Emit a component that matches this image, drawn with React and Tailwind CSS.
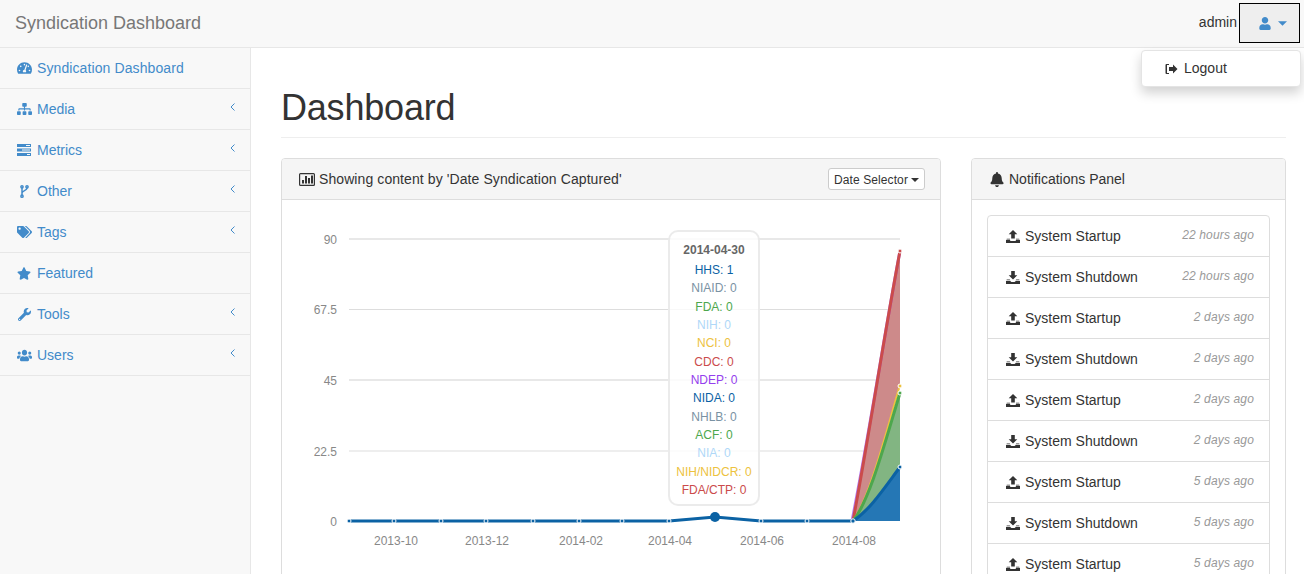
import React from "react";
import { FaTachometerAlt, FaSitemap, FaTags, FaStar, FaWrench, FaUsers, FaUser, FaBell } from "react-icons/fa";

const TasksIcon = ({ className }) => (
  <svg className={className} viewBox="0 0 14 12" fill="currentColor">
    <path fillRule="evenodd" d="M0 0h14v3H0zM9 1v1h4V1zM0 4.5h14v3H0zM5 5.5v1h8v-1zM0 9h14v3H0zM10 10v1h3v-1z" />
  </svg>
);
const ForkIcon = ({ className }) => (
  <svg className={className} viewBox="0 0 9 14" fill="none" stroke="currentColor" strokeWidth="1.6">
    <circle cx="1.8" cy="2" r="1.2" />
    <circle cx="7.2" cy="2" r="1.2" />
    <circle cx="1.8" cy="12" r="1.2" />
    <path d="M1.8 3.2v7.6M7.2 3.2c0 3-5.4 2.6-5.4 5.6" />
  </svg>
);
const LeftAngle = () => (
  <svg className="w-[5px] h-[8px] mb-[4px] text-[#428bca]" viewBox="0 0 5 8" fill="none" stroke="currentColor" strokeWidth="1">
    <path d="M4.5 0.5 1 4l3.5 3.5" />
  </svg>
);
const LogoutIcon = ({ className }) => (
  <svg className={className} viewBox="0 0 13 12" fill="currentColor">
    <path d="M4 1H1.5A1 1 0 0 0 .5 2v8a1 1 0 0 0 1 1H4V10H2V2h2z" />
    <path d="M4 4h4V1.5L12.5 6 8 10.5V8H4z" />
  </svg>
);
const UploadIcon = ({ className }) => (
  <svg className={className} viewBox="0 0 14 13" fill="currentColor">
    <path d="M7 0l4.3 4.3H8.8V8.5H5.2V4.3H2.7z" />
    <path d="M0 10h4.2v1h5.6v-1H14v3H0zM.8 8.8H4v.6H.4zM10 8.8h3.2l.4.6H10z" />
  </svg>
);
const DownloadIcon = ({ className }) => (
  <svg className={className} viewBox="0 0 14 13" fill="currentColor">
    <path d="M5.2 0h3.6v4.2h2.5L7 8.5 2.7 4.2h2.5z" />
    <path d="M0 10h4.2l1.2 1h3.2l1.2-1H14v3H0zM.8 8.6H3.8l.6.7H.4zM10.2 8.6h3l.4.7H9.6z" />
  </svg>
);
const BarBoxIcon = ({ className }) => (
  <svg className={className} viewBox="0 0 16 13" fill="currentColor">
    <path fillRule="evenodd" d="M1.5 0h13A1.5 1.5 0 0 1 16 1.5v10a1.5 1.5 0 0 1-1.5 1.5h-13A1.5 1.5 0 0 1 0 11.5v-10A1.5 1.5 0 0 1 1.5 0zM1.2 1.2v10.6h13.6V1.2z" />
    <path d="M3 7h2v3.5H3zM6 3h2v7.5H6zM9 5h2v5.5H9zM12 2.5h2v8h-2z" />
  </svg>
);
const Caret = ({ className }) => (
  <svg className={className} viewBox="0 0 8 4" fill="currentColor"><path d="M0 0h8L4 4z" /></svg>
);

const navItems = [
  { label: "Syndication Dashboard", track: "tracking-[0.1px]", icon: <FaTachometerAlt className="w-[15px] h-[14px]" /> },
  { label: "Media", icon: <FaSitemap className="w-[15px] h-[14px]" />, sub: true },
  { label: "Metrics", icon: <TasksIcon className="w-[14px] h-[12px]" />, sub: true },
  { label: "Other", icon: <ForkIcon className="w-[9px] h-[13px] ml-[3px]" />, sub: true },
  { label: "Tags", icon: <FaTags className="w-[15px] h-[14px]" />, sub: true },
  { label: "Featured", icon: <FaStar className="w-[14px] h-[13px]" /> },
  { label: "Tools", icon: <FaWrench className="w-[13px] h-[13px] ml-[1px]" />, sub: true },
  { label: "Users", icon: <FaUsers preserveAspectRatio="none" className="w-[15px] h-[13px]" />, sub: true },
];

const notes = [
  ["up", "System Startup", "22 hours ago"],
  ["down", "System Shutdown", "22 hours ago"],
  ["up", "System Startup", "2 days ago"],
  ["down", "System Shutdown", "2 days ago"],
  ["up", "System Startup", "2 days ago"],
  ["down", "System Shutdown", "2 days ago"],
  ["up", "System Startup", "5 days ago"],
  ["down", "System Shutdown", "5 days ago"],
  ["up", "System Startup", "5 days ago"],
];

const tips = [
  ["HHS: 1", "text-[#0b62a4]"],
  ["NIAID: 0", "text-[#7a92a3]"],
  ["FDA: 0", "text-[#4da74d]"],
  ["NIH: 0", "text-[#afd8f8]"],
  ["NCI: 0", "text-[#edc240]"],
  ["CDC: 0", "text-[#cb4b4b]"],
  ["NDEP: 0", "text-[#9440ed]"],
  ["NIDA: 0", "text-[#0b62a4]"],
  ["NHLB: 0", "text-[#7a92a3]"],
  ["ACF: 0", "text-[#4da74d]"],
  ["NIA: 0", "text-[#afd8f8]"],
  ["NIH/NIDCR: 0", "text-[#edc240]"],
  ["FDA/CTP: 0", "text-[#cb4b4b]"],
];

const pts = [349, 394, 441, 486, 533, 579, 622, 669, 761, 807];
const grid = [
  ["90", 239, 2, "#e8e8e8"],
  ["67.5", 309.5, 1, "#dddddd"],
  ["45", 380, 2, "#e8e8e8"],
  ["22.5", 451, 1, "#dddddd"],
];
const xl = [["2013-10", 396], ["2013-12", 487], ["2014-02", 581], ["2014-04", 670], ["2014-06", 762], ["2014-08", 854]];

const blue = "C870 510 885 487 900 467";
const green = "C870 500 885 442 900 393";
const yellow = "C870 497 885 436 900 385";
const red = "C870 430 885 330 900 251";

function Chart() {
  return (
    <svg className="block w-[628px] h-[358px] shrink-0" viewBox="297 215 628 358">
      {grid.map(([l, y, w, c]) => (
        <g key={l}>
          <line x1="349" x2="900" y1={y} y2={y} stroke={c} strokeWidth={w} />
          <text x="337" y={y + 4.5} textAnchor="end" fontSize="12" fill="#888">{l}</text>
        </g>
      ))}
      <text x="337" y="525.5" textAnchor="end" fontSize="12" fill="#888">0</text>
      {xl.map(([l, x]) => (
        <text key={l} x={x} y="545" textAnchor="middle" fontSize="12" fill="#888">{l}</text>
      ))}
      <path d={`M853 521 ${blue} V521Z`} fill="#2577b5" />
      <path d={`M853 521 ${green} V467 C885 487 870 510 853 521Z`} fill="#82b582" />
      <path d={`M853 521 ${red} V385 C885 436 870 497 853 521Z`} fill="#cd8a8a" />
      <path d={`M852 521 ${red}`} fill="none" stroke="#9440ed" strokeWidth="3" strokeOpacity="0.7" />
      <path d={`M853 521 ${red}`} fill="none" stroke="#cb4b4b" strokeWidth="3" />
      <path d={`M853 521 ${yellow}`} fill="none" stroke="#edc240" strokeWidth="2" />
      <path d={`M853 521 ${green}`} fill="none" stroke="#4da74d" strokeWidth="3" />
      <path d={`M853 521 ${blue}`} fill="none" stroke="#0b62a4" strokeWidth="3" />
      <path d="M349 521H669L715 517 761 521H853" fill="none" stroke="#0b62a4" strokeWidth="3" />
      {pts.map((x) => (
        <circle key={x} cx={x} cy="521" r="2" fill="#0b62a4" stroke="#fff" strokeWidth="1" />
      ))}
      <circle cx="853" cy="521" r="2.2" fill="#0b62a4" stroke="#fff" strokeWidth="1" />
      <circle cx="715" cy="517" r="5" fill="#0b62a4" />
      <circle cx="900" cy="467" r="2" fill="#0b62a4" stroke="#fff" strokeWidth="1" />
      <circle cx="900" cy="393" r="2" fill="#4da74d" stroke="#fff" strokeWidth="1" />
      <circle cx="900" cy="386" r="2" fill="#edc240" stroke="#fff" strokeWidth="1" />
      <circle cx="900" cy="251" r="2" fill="#cb4b4b" stroke="#fff" strokeWidth="1" />
    </svg>
  );
}

export default function App() {
  return (
    <div className="relative h-[574px] overflow-hidden bg-white flex flex-col font-['Liberation_Sans',Arial,sans-serif] text-[14px] text-[#333]">
      <header className="relative h-[48px] shrink-0 bg-[#f8f8f8] border-b border-[#e7e7e7] flex items-center pl-[15px] pr-[4px]">
        <span className="text-[18px] text-[#777] flex-1 mb-[1px]">Syndication Dashboard</span>
        <span className="mr-[2px] mb-[3px]">admin</span>
        <button className="h-[40px] w-[61px] mb-[1px] bg-[#eeeeee] border border-black flex items-center justify-center gap-[7px] pl-[6px] text-[#428bca]">
          <FaUser className="w-[12px] h-[13px]" />
          <Caret className="w-[9px] h-[5px]" />
        </button>
        <div className="absolute z-10 top-[50px] right-[3px] w-[160px] h-[37px] bg-white border border-[#e4e4e4] rounded-[4px] shadow-[0_6px_12px_rgba(0,0,0,0.18)] flex items-center pl-[23px] gap-[6px]">
          <LogoutIcon className="w-[13px] h-[12px]" />
          <span>Logout</span>
        </div>
      </header>
      <div className="flex flex-1 min-h-0">
        <aside className="w-[251px] shrink-0 bg-[#f8f8f8] border-r border-[#e7e7e7]">
          {navItems.map((n) => (
            <div key={n.label} className="h-[41px] border-b border-[#e7e7e7] flex items-center pl-[17px] pr-[15px] text-[#428bca]">
              <span className="w-[20px] flex items-center shrink-0">{n.icon}</span>
              <span className={`flex-1 ${n.track || ""}`}>{n.label}</span>
              {n.sub && <LeftAngle />}
            </div>
          ))}
        </aside>
        <main className="flex-1 min-w-0 pl-[30px] pr-[18px] pt-[40px]">
          <div className="border-b border-[#eeeeee] pb-[9px] mb-[20px]">
            <h1 className="text-[36px] leading-[40px] font-medium text-[#333] tracking-[-0.2px]">Dashboard</h1>
          </div>
          <div className="flex gap-[30px] items-start">
            <section className="w-[660px] shrink-0 border border-[#dddddd] rounded-[4px]">
              <div className="h-[41px] bg-[#f5f5f5] border-b border-[#dddddd] rounded-t-[3px] flex items-center pl-[17px] pr-[15px]">
                <BarBoxIcon className="w-[16px] h-[13px] mr-[4px]" />
                <span className="flex-1 tracking-[0.087px]">Showing content by 'Date Syndication Captured'</span>
                <button className="h-[22px] w-[97px] pt-[1px] bg-white border border-[#cccccc] rounded-[3px] text-[12px] flex items-center justify-center gap-[3px] text-[#333] tracking-[0.1px]">
                  Date Selector
                  <Caret className="w-[8px] h-[4px]" />
                </button>
              </div>
              <div className="relative p-[15px] h-[400px]">
                <Chart />
                <div className="absolute left-[386px] top-[30px] w-[92px] h-[276px] rounded-[10px] border-2 border-[#e6e6e6cc] bg-[#ffffffcc] p-[6px] text-[12px] text-center text-[#666]">
                  <div className="font-bold leading-[24px] h-[23px]">2014-04-30</div>
                  {tips.map(([t, c]) => (
                    <div key={t} className={`leading-[18.33px] whitespace-nowrap -mx-[4px] ${c}`}>{t}</div>
                  ))}
                </div>
              </div>
            </section>
            <section className="flex-1 min-w-0 border border-[#dddddd] rounded-[4px]">
              <div className="h-[41px] bg-[#f5f5f5] border-b border-[#dddddd] rounded-t-[3px] flex items-center pl-[18px] gap-[5px]">
                <FaBell className="w-[14px] h-[15px]" />
                <span>Notifications Panel</span>
              </div>
              <div className="p-[15px]">
                <div className="border border-[#dddddd] rounded-[4px]">
                  {notes.map(([k, t, a], i) => (
                    <div key={i} className={`h-[40px] -mb-px border-b border-[#dddddd] flex items-center pl-[18px] pr-[15px] box-content ${i === 0 ? "" : "pt-[1px]"}`}>
                      {k === "up" ? <UploadIcon className="w-[14px] h-[13px] mr-[5px]" /> : <DownloadIcon className="w-[14px] h-[13px] mr-[5px]" />}
                      <span className="flex-1">{t}</span>
                      <span className={`italic text-[12px] text-[#999] tracking-[0.15px] ${i === 0 ? "mb-[2px]" : "mb-[3px]"}`}>{a}</span>
                    </div>
                  ))}
                </div>
              </div>
            </section>
          </div>
        </main>
      </div>
    </div>
  );
}
